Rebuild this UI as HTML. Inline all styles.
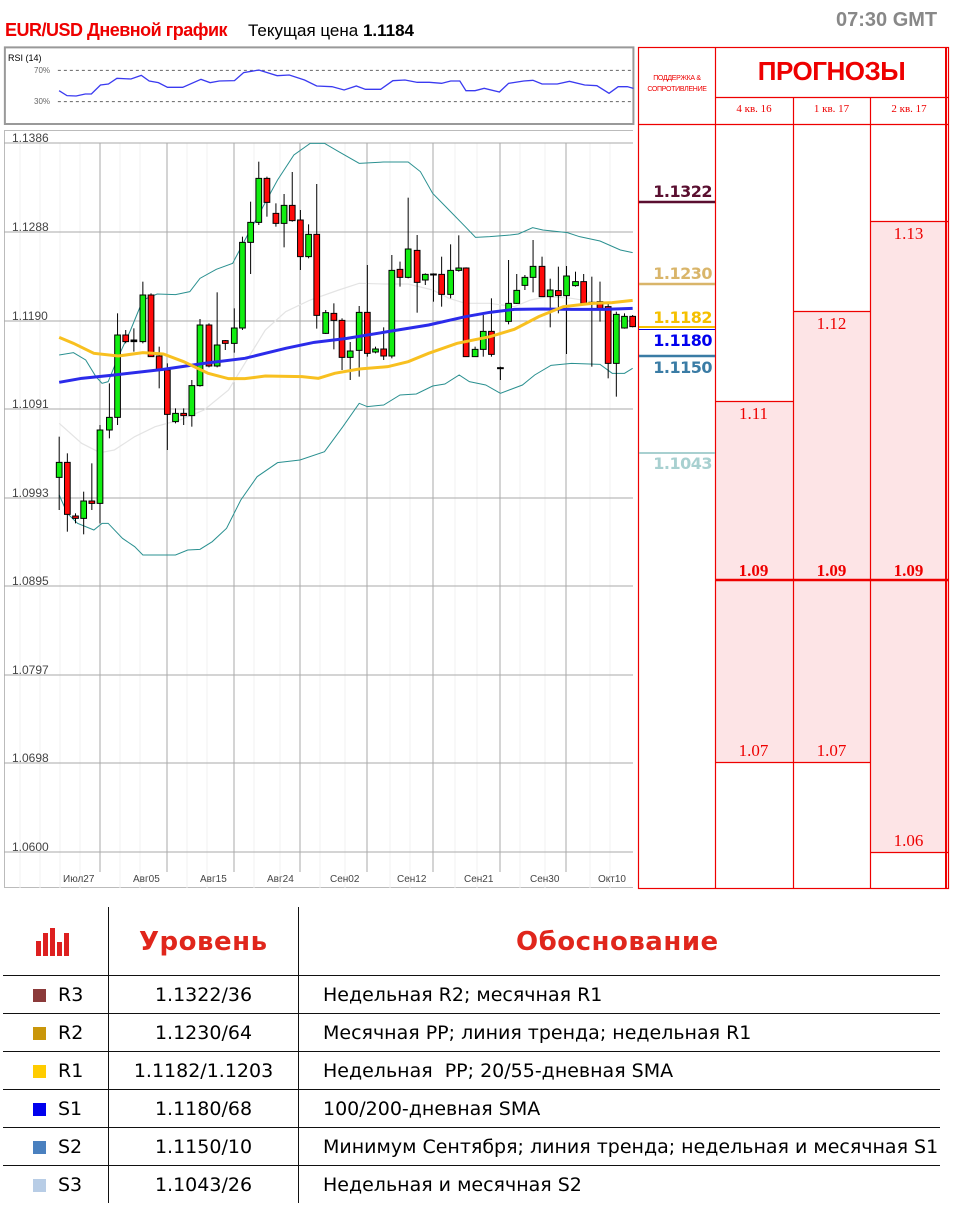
<!DOCTYPE html>
<html><head><meta charset="utf-8"><style>
body{margin:0;width:955px;height:1209px;background:#fff;position:relative;overflow:hidden;font-family:"Liberation Sans","DejaVu Sans",sans-serif}
.a{position:absolute;white-space:nowrap}
.sr{position:absolute;right:243px;font-weight:bold;font-size:16px;font-family:"DejaVu Sans",sans-serif;letter-spacing:-0.5px}
.fc{position:absolute;color:#e00;font-family:"Liberation Serif",serif;font-size:17px;text-align:center;width:77px}
table{position:absolute;left:3px;top:907px;border-collapse:collapse;font-family:"DejaVu Sans",sans-serif;font-size:19px}
td{border-top:1.5px solid #111;height:37px;padding:0}
td+td{border-left:1.5px solid #111}
.sw{display:inline-block;width:13px;height:13px;margin:0 12px 0 30px;vertical-align:-1px}
</style></head><body>
<div class="a" style="left:5px;top:20px;font-size:18px;font-weight:bold;color:#e00;letter-spacing:-0.5px">EUR/USD Дневной график</div>
<div class="a" style="left:248px;top:21px;font-size:17px;color:#000">Текущая цена <b>1.1184</b></div>
<div class="a" style="left:836px;top:9px;font-size:20px;font-weight:bold;color:#888">07:30 GMT</div>

<svg class="a" style="left:0;top:0" width="955" height="150" viewBox="0 0 1568 450" preserveAspectRatio="none">
<rect x="8" y="142" width="1032" height="230" fill="none" stroke="#999" stroke-width="2" vector-effect="non-scaling-stroke"/>
<line x1="95" y1="211" x2="1040" y2="211" stroke="#666" stroke-dasharray="3 3" vector-effect="non-scaling-stroke"/>
<line x1="95" y1="305" x2="1040" y2="305" stroke="#666" stroke-dasharray="3 3" vector-effect="non-scaling-stroke"/>
<polyline fill="none" stroke="#3a3af0" stroke-width="1.3" vector-effect="non-scaling-stroke" points="97,272 110,287 125,288 140,282 150,282 165,255 178,252 192,235 215,237 232,226 245,243 260,248 275,262 300,262 330,238 345,248 360,243 385,242 400,218 425,210 455,227 475,225 500,240 520,258 545,260 565,270 585,258 600,268 625,268 645,242 665,240 685,247 705,247 725,250 740,243 755,243 765,272 780,272 795,265 820,276 835,250 860,243 875,241 890,252 915,252 935,244 960,255 980,257 1000,280 1015,260 1030,260 1040,265"/>
</svg>
<div class="a" style="left:8px;top:53px;font-size:9px;color:#000">RSI (14)</div>
<div class="a" style="left:34px;top:66px;font-size:8px;color:#666">70%</div>
<div class="a" style="left:34px;top:97px;font-size:8px;color:#666">30%</div>

<div class="a" style="left:4px;top:130px;width:629px;height:758px;border:1px solid #bbb;border-right:none;box-sizing:border-box"></div>
<svg class="a" style="left:0;top:130px" width="640" height="760">
<g stroke="#f0f0f0"><line x1="20" y1="13" x2="20" y2="758"/><line x1="40" y1="13" x2="40" y2="758"/><line x1="60" y1="13" x2="60" y2="758"/><line x1="80" y1="13" x2="80" y2="758"/><line x1="120" y1="13" x2="120" y2="758"/><line x1="140" y1="13" x2="140" y2="758"/><line x1="187" y1="13" x2="187" y2="758"/><line x1="207" y1="13" x2="207" y2="758"/><line x1="254" y1="13" x2="254" y2="758"/><line x1="280" y1="13" x2="280" y2="758"/><line x1="320" y1="13" x2="320" y2="758"/><line x1="345" y1="13" x2="345" y2="758"/><line x1="390" y1="13" x2="390" y2="758"/><line x1="410" y1="13" x2="410" y2="758"/><line x1="455" y1="13" x2="455" y2="758"/><line x1="477" y1="13" x2="477" y2="758"/><line x1="520" y1="13" x2="520" y2="758"/><line x1="545" y1="13" x2="545" y2="758"/><line x1="590" y1="13" x2="590" y2="758"/><line x1="610" y1="13" x2="610" y2="758"/></g>
<g stroke="#aaa"><line x1="100" y1="13" x2="100" y2="742"/><line x1="167" y1="13" x2="167" y2="742"/><line x1="234" y1="13" x2="234" y2="742"/><line x1="300" y1="13" x2="300" y2="742"/><line x1="367" y1="13" x2="367" y2="742"/><line x1="433" y1="13" x2="433" y2="742"/><line x1="500" y1="13" x2="500" y2="742"/><line x1="566" y1="13" x2="566" y2="742"/>
<line x1="4" y1="13" x2="633" y2="13"/><line x1="4" y1="102" x2="633" y2="102"/><line x1="4" y1="191" x2="633" y2="191"/><line x1="4" y1="279" x2="633" y2="279"/><line x1="4" y1="368" x2="633" y2="368"/><line x1="4" y1="456" x2="633" y2="456"/><line x1="4" y1="545" x2="633" y2="545"/><line x1="4" y1="633" x2="633" y2="633"/><line x1="4" y1="722" x2="633" y2="722"/></g>
</svg>
<div class="a" style="left:12px;top:131px;font-size:12px;color:#444">1.1386</div>
<div class="a" style="left:12px;top:220px;font-size:12px;color:#444">1.1288</div>
<div class="a" style="left:12px;top:309px;font-size:12px;color:#444">1.1190</div>
<div class="a" style="left:12px;top:397px;font-size:12px;color:#444">1.1091</div>
<div class="a" style="left:12px;top:486px;font-size:12px;color:#444">1.0993</div>
<div class="a" style="left:12px;top:574px;font-size:12px;color:#444">1.0895</div>
<div class="a" style="left:12px;top:663px;font-size:12px;color:#444">1.0797</div>
<div class="a" style="left:12px;top:751px;font-size:12px;color:#444">1.0698</div>
<div class="a" style="left:12px;top:840px;font-size:12px;color:#444">1.0600</div>
<div class="a" style="top:874px;font-size:10px;color:#444;left:0;width:640px">
<span class="a" style="left:63px">Июл27</span><span class="a" style="left:133px">Авг05</span><span class="a" style="left:200px">Авг15</span><span class="a" style="left:267px">Авг24</span><span class="a" style="left:330px">Сен02</span><span class="a" style="left:397px">Сен12</span><span class="a" style="left:464px">Сен21</span><span class="a" style="left:530px">Сен30</span><span class="a" style="left:598px">Окт10</span></div>

<svg class="a" style="left:0;top:130px" width="640" height="450" viewBox="0 0 1568 1350" preserveAspectRatio="none" id="ch">
<g fill="none" vector-effect="non-scaling-stroke">
<polyline stroke="#e4e4e4" stroke-width="1.2" vector-effect="non-scaling-stroke" points="145,880 200,940 245,968 280,960 330,920 380,890 440,870 500,840 560,780 600,700 650,600 700,545 760,510 830,480 880,460 940,462 1000,462 1060,480 1100,505 1140,520 1200,520 1260,530 1300,510 1340,500 1400,505 1450,515 1480,518"/>
<polyline stroke="#2a9090" stroke-width="1" vector-effect="non-scaling-stroke" points="145,675 180,668 210,690 235,740 250,760 265,755 290,680 320,600 350,510 385,492 430,494 465,485 490,445 530,418 570,400 600,330 640,240 680,150 720,75 760,40 795,40 830,65 880,100 940,96 1000,96 1030,125 1060,190 1100,240 1140,290 1165,322 1200,320 1250,315 1270,312 1305,293 1330,300 1390,308 1420,320 1470,333 1520,360 1550,368"/>
<polyline stroke="#2a9090" stroke-width="1" vector-effect="non-scaling-stroke" points="145,1095 165,1150 190,1180 230,1200 250,1180 265,1180 300,1225 330,1250 350,1275 430,1275 460,1260 490,1258 520,1235 555,1195 590,1110 630,1040 680,998 735,990 795,965 840,890 880,820 900,830 940,825 980,795 1020,792 1060,768 1090,762 1125,735 1150,755 1190,765 1226,790 1280,765 1310,735 1350,706 1400,700 1470,703 1500,730 1530,730 1550,715"/>
</g>
<g id="cd" stroke="#000" stroke-width="1" vector-effect="non-scaling-stroke"></g>
<polyline fill="none" stroke="#2b2bea" stroke-width="3" vector-effect="non-scaling-stroke" points="145,757 200,745 280,735 400,718 500,700 600,685 700,655 770,637 850,625 950,605 1050,585 1140,560 1200,547 1260,538 1330,537 1400,538 1480,538 1550,535"/>
<polyline fill="none" stroke="#f8c020" stroke-width="3" vector-effect="non-scaling-stroke" points="145,622 180,640 230,670 290,678 350,668 400,672 450,695 510,730 560,746 600,746 650,738 740,740 780,745 820,730 880,717 950,710 1000,695 1050,670 1120,640 1200,620 1260,598 1320,560 1380,530 1450,520 1500,518 1550,511"/>
</svg>
<script>
var d=[[145,920,1140,997,1042,1],[165,970,1205,997,1153,0],[185,1150,1180,1158,1165,0],[205,1085,1213,1113,1165,1],[225,1000,1140,1113,1120,0],[245,885,1180,900,1120,1],[268,760,925,862,900,1],[288,550,885,615,862,1],[308,600,640,615,635,0],[328,595,665,630,635,2],[350,455,640,495,635,1],[370,490,680,495,680,0],[390,650,775,678,720,0],[410,700,960,720,853,0],[430,835,880,850,875,1],[450,835,885,850,857,0],[470,750,890,767,857,1],[490,567,770,585,767,1],[512,580,712,585,708,0],[532,487,712,645,708,1],[552,630,660,632,640,0],[574,535,668,594,640,1],[594,320,600,337,594,1],[614,215,432,277,337,1],[634,95,285,145,277,1],[654,140,260,145,217,0],[676,220,290,250,280,0],[696,192,352,226,280,1],[716,126,275,226,272,0],[736,240,420,270,380,0],[756,283,385,313,380,1],[776,162,596,313,556,0],[798,540,612,548,610,1],[818,520,658,550,571,0],[838,565,720,571,682,0],[858,636,750,663,682,1],[880,528,740,547,661,1],[900,405,680,547,670,0],[920,650,670,657,666,1],[940,592,690,657,678,0],[960,375,685,421,678,1],[980,395,470,418,442,0],[1000,203,445,357,442,1],[1022,315,548,361,457,0],[1042,430,465,433,450,1],[1062,430,515,432,434,2],[1082,380,530,433,493,0],[1104,343,505,421,493,1],[1124,316,425,414,421,1],[1142,412,680,414,680,0],[1164,650,680,658,680,1],[1184,555,680,604,658,1],[1204,505,680,604,673,0],[1226,710,750,713,715,2],[1246,390,583,520,574,1],[1266,432,522,481,520,1],[1286,435,480,442,466,1],[1306,330,487,409,442,1],[1328,380,500,409,500,0],[1348,446,592,480,500,1],[1368,410,550,482,497,0],[1388,408,672,438,497,1],[1410,425,470,455,467,1],[1430,432,525,455,520,0],[1450,440,710,517,520,2],[1470,455,575,515,535,0],[1490,515,745,530,700,0],[1510,545,800,553,700,1],[1530,550,596,559,594,1],[1550,555,592,559,590,0]];
var s='';d.forEach(function(c){var col=c[5]==1?'#11ee11':c[5]==0?'#ff0a0a':'#000';s+='<line x1="'+c[0]+'" y1="'+c[1]+'" x2="'+c[0]+'" y2="'+c[2]+'" vector-effect="non-scaling-stroke"/><rect x="'+(c[0]-7)+'" y="'+c[3]+'" width="14" height="'+Math.max(c[4]-c[3],3)+'" fill="'+col+'" vector-effect="non-scaling-stroke"/>';});
document.getElementById('cd').innerHTML=s;
</script>

<!-- right panel -->
<div class="a" style="left:715px;top:401px;width:78px;height:361px;background:#fde4e6"></div>
<div class="a" style="left:793px;top:311px;width:77px;height:451px;background:#fde4e6"></div>
<div class="a" style="left:870px;top:221px;width:78px;height:631px;background:#fde4e6"></div>
<svg class="a" style="left:0;top:0" width="955" height="900">
<g stroke="#e00" stroke-width="1.2">
<rect x="638.5" y="47.5" width="310" height="841" fill="none"/>
<line x1="715.5" y1="47" x2="715.5" y2="888"/><line x1="793.5" y1="97" x2="793.5" y2="888"/><line x1="870.5" y1="97" x2="870.5" y2="888"/>
<line x1="715" y1="97.5" x2="948" y2="97.5"/><line x1="638" y1="124.5" x2="948" y2="124.5"/>
<line x1="715" y1="401.5" x2="793" y2="401.5"/><line x1="793" y1="311.5" x2="870" y2="311.5"/><line x1="870" y1="221.5" x2="948" y2="221.5"/>
<line x1="715" y1="762.5" x2="870" y2="762.5"/><line x1="870" y1="852.5" x2="948" y2="852.5"/>
<line x1="715" y1="580" x2="948" y2="580" stroke-width="2.5"/>
</g>
<line x1="946" y1="47" x2="946" y2="888" stroke="#e00" stroke-width="2"/>
<line x1="639" y1="202" x2="715" y2="202" stroke="#5a0f30" stroke-width="2.5"/>
<line x1="639" y1="284" x2="715" y2="284" stroke="#d9b56a" stroke-width="2.5"/>
<line x1="639" y1="327" x2="715" y2="327" stroke="#f5c000" stroke-width="2"/>
<line x1="639" y1="329.5" x2="715" y2="329.5" stroke="#0000ee" stroke-width="1"/>
<line x1="639" y1="356" x2="715" y2="356" stroke="#3a7ca5" stroke-width="2.5"/>
<line x1="639" y1="453" x2="715" y2="453" stroke="#a8d0d0" stroke-width="2"/>
</svg>
<div class="a" style="left:639px;top:73px;width:76px;text-align:center;font-size:7px;line-height:11px;color:#e00;letter-spacing:-0.3px">ПОДДЕРЖКА &amp;<br>СОПРОТИВЛЕНИЕ</div>
<div class="a" style="left:715px;top:56px;width:233px;text-align:center;font-size:26px;font-weight:bold;color:#e00;letter-spacing:-0.5px">ПРОГНОЗЫ</div>
<div class="a" style="left:715px;top:103px;width:78px;text-align:center;font-size:11px;color:#e00;font-family:'Liberation Serif',serif">4 кв. 16</div>
<div class="a" style="left:793px;top:103px;width:77px;text-align:center;font-size:11px;color:#e00;font-family:'Liberation Serif',serif">1 кв. 17</div>
<div class="a" style="left:870px;top:103px;width:78px;text-align:center;font-size:11px;color:#e00;font-family:'Liberation Serif',serif">2 кв. 17</div>
<div class="sr" style="top:182px;color:#5a0f30">1.1322</div>
<div class="sr" style="top:264px;color:#d9b56a">1.1230</div>
<div class="sr" style="top:308px;color:#f5c000">1.1182</div>
<div class="sr" style="top:331px;color:#0000ee">1.1180</div>
<div class="sr" style="top:358px;color:#3a7ca5">1.1150</div>
<div class="sr" style="top:454px;color:#a8d0d0">1.1043</div>
<div class="fc" style="left:715px;top:404px">1.11</div>
<div class="fc" style="left:793px;top:314px">1.12</div>
<div class="fc" style="left:870px;top:224px">1.13</div>
<div class="fc" style="left:715px;top:561px;font-weight:bold">1.09</div>
<div class="fc" style="left:793px;top:561px;font-weight:bold">1.09</div>
<div class="fc" style="left:870px;top:561px;font-weight:bold">1.09</div>
<div class="fc" style="left:715px;top:741px">1.07</div>
<div class="fc" style="left:793px;top:741px">1.07</div>
<div class="fc" style="left:870px;top:831px">1.06</div>

<!-- table -->
<div class="a" style="left:108px;top:907px;width:0;height:68px;border-left:1.5px solid #111"></div>
<div class="a" style="left:298px;top:907px;width:0;height:68px;border-left:1.5px solid #111"></div>
<svg class="a" style="left:36px;top:918px" width="38" height="38"><g fill="#dd2020"><rect x="0" y="23" width="5" height="15"/><rect x="7" y="15" width="5" height="23"/><rect x="14" y="10" width="5" height="28"/><rect x="21" y="24" width="5" height="14"/><rect x="28" y="15" width="5" height="23"/></g></svg>
<div class="a" style="left:139px;top:927px;font-size:26px;font-weight:900;color:#e0261c;font-family:'DejaVu Sans',sans-serif;letter-spacing:0.5px">Уровень</div>
<div class="a" style="left:516px;top:927px;font-size:26px;font-weight:900;color:#e0261c;font-family:'DejaVu Sans',sans-serif;letter-spacing:0.5px">Обоснование</div>
<table style="top:975px;width:937px">
<tr><td style="width:105px"><span class="sw" style="background:#8b3a3a"></span>R3</td><td style="width:189px;text-align:center">1.1322/36</td><td style="padding-left:24px">Недельная R2; месячная R1</td></tr>
<tr><td><span class="sw" style="background:#c9960a"></span>R2</td><td style="text-align:center">1.1230/64</td><td style="padding-left:24px">Месячная PP; линия тренда; недельная R1</td></tr>
<tr><td><span class="sw" style="background:#ffcc00"></span>R1</td><td style="text-align:center">1.1182/1.1203</td><td style="padding-left:24px">Недельная&nbsp; PP; 20/55-дневная SMA</td></tr>
<tr><td><span class="sw" style="background:#0000ee"></span>S1</td><td style="text-align:center">1.1180/68</td><td style="padding-left:24px">100/200-дневная SMA</td></tr>
<tr><td><span class="sw" style="background:#4a80bf"></span>S2</td><td style="text-align:center">1.1150/10</td><td style="padding-left:24px">Минимум Сентября; линия тренда; недельная и месячная S1</td></tr>
<tr><td><span class="sw" style="background:#b8cde6"></span>S3</td><td style="text-align:center">1.1043/26</td><td style="padding-left:24px">Недельная и месячная S2</td></tr>
</table>
</body></html>
